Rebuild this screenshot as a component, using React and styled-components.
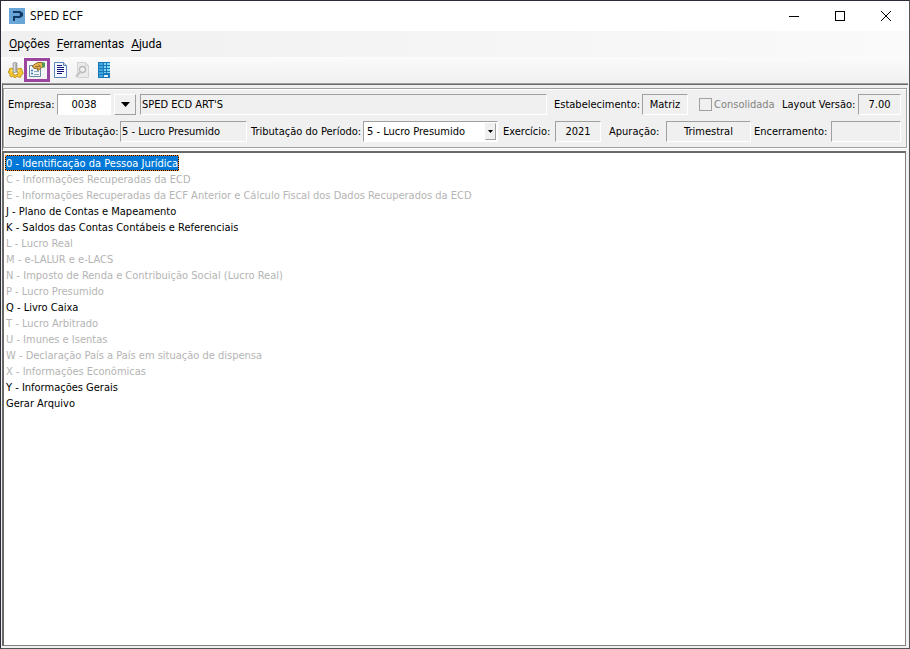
import styled, { createGlobalStyle } from "styled-components";

const items = [
  { text: "0 - Identificação da Pessoa Jurídica", selected: true },
  { text: "C - Informações Recuperadas da ECD", off: true },
  {
    text: "E - Informações Recuperadas da ECF Anterior e Cálculo Fiscal dos Dados Recuperados da ECD",
    off: true,
  },
  { text: "J - Plano de Contas e Mapeamento" },
  { text: "K - Saldos das Contas Contábeis e Referenciais" },
  { text: "L - Lucro Real", off: true },
  { text: "M - e-LALUR e e-LACS", off: true },
  { text: "N - Imposto de Renda e Contribuição Social (Lucro Real)", off: true },
  { text: "P - Lucro Presumido", off: true },
  { text: "Q - Livro Caixa" },
  { text: "T - Lucro Arbitrado", off: true },
  { text: "U - Imunes e Isentas", off: true },
  { text: "W - Declaração País a País em situação de dispensa", off: true },
  { text: "X - Informações Econômicas", off: true },
  { text: "Y - Informações Gerais" },
  { text: "Gerar Arquivo" },
];

function App() {
  return (
    <Window>
      <GlobalStyle />
      <TitleBar>
        <LogoIcon />
        <Title>SPED ECF</Title>
        <Caption aria-label="Minimizar">
          <svg width="10" height="10" shapeRendering="crispEdges">
            <path d="M0 5.5h10" stroke="#000" />
          </svg>
        </Caption>
        <Caption aria-label="Maximizar">
          <svg width="10" height="10" shapeRendering="crispEdges">
            <path d="M.5 .5h9v9h-9z" stroke="#000" fill="none" />
          </svg>
        </Caption>
        <Caption aria-label="Fechar">
          <svg width="10" height="10">
            <path d="M0 0l10 10M10 0L0 10" stroke="#000" />
          </svg>
        </Caption>
      </TitleBar>
      <MenuBar>
        <MenuItem><u>O</u>pções</MenuItem>
        <MenuItem><u>F</u>erramentas</MenuItem>
        <MenuItem><u>A</u>juda</MenuItem>
      </MenuBar>
      <ToolBar>
        <Tool $w={16} aria-label="Configurações"><GearIcon /></Tool>
        <Tool $w={26} $marked aria-label="Propriedades"><FormIcon /></Tool>
        <Tool $w={22} aria-label="Relatório"><ReportIcon /></Tool>
        <Tool $w={22} disabled aria-label="Visualizar"><PreviewIcon /></Tool>
        <Tool $w={22} aria-label="Empresa"><BuildingIcon /></Tool>
      </ToolBar>
      <Panel>
        <Group>
          <Row>
            <Label htmlFor="empresa" $w={49}>Empresa:</Label>
            <Field id="empresa" $w={54} $center $white defaultValue="0038" />
            <DropButton aria-label="Escolher empresa">
              <svg width="9" height="5"><path d="M0 0h9L4.5 5z" /></svg>
            </DropButton>
            <Field aria-label="Nome da empresa" $grow readOnly defaultValue="SPED ECD ART'S" />
            <Label htmlFor="estab" $w={88} $lead={7}>Estabelecimento:</Label>
            <Field id="estab" $w={46} $center readOnly defaultValue="Matriz" />
            <Check>
              <input type="checkbox" disabled />
              Consolidada
            </Check>
            <Label htmlFor="versao" $w={76}>Layout Versão:</Label>
            <Field id="versao" $w={43} $center readOnly defaultValue="7.00" />
          </Row>
          <Row>
            <Label htmlFor="regime" $w={112}>Regime de Tributação:</Label>
            <Field id="regime" $w={127} readOnly defaultValue="5 - Lucro Presumido" />
            <Label htmlFor="periodo" $w={112} $lead={4}>Tributação do Período:</Label>
            <Combo>
              <select id="periodo">
                <option>5 - Lucro Presumido</option>
              </select>
              <ComboArrow>
                <svg width="5" height="3"><path d="M0 0h5L2.5 3z" /></svg>
              </ComboArrow>
            </Combo>
            <Label htmlFor="exercicio" $w={52} $lead={5}>Exercício:</Label>
            <Field id="exercicio" $w={46} $center readOnly defaultValue="2021" />
            <Label htmlFor="apuracao" $w={57} $lead={8}>Apuração:</Label>
            <Field id="apuracao" $w={85} $center readOnly defaultValue="Trimestral" />
            <Label htmlFor="encerramento" $w={77} $lead={3}>Encerramento:</Label>
            <Field id="encerramento" $grow readOnly />
          </Row>
        </Group>
      </Panel>
      <ListBox>
        {items.map((item) => (
          <li key={item.text}>
            <Item disabled={item.off} $selected={item.selected}>
              {item.text}
            </Item>
          </li>
        ))}
      </ListBox>
    </Window>
  );
}

function LogoIcon() {
  return (
    <svg width="16" height="16" viewBox="0 0 16 16">
      <path d="M0 0h16v16H0z" fill="#6aa5d8" />
      <path d="M4 3h7l3 2v3l-3 2H6v3H4V8h6l1-1V6l-1-1H4z" fill="#123a66" />
    </svg>
  );
}

// gold cog with a metal pin standing in it
function GearIcon() {
  return (
    <svg width="16" height="16" viewBox="0 0 16 16">
      <path
        d="M1 7l2-1 2 1h5l2-1 2 1v2l1 1v2l-2 1v2l-2 .5-2-1.500L8 15.500H6L5.500 14l-2 1L2 14v-2L.5 11V9L2 8.500z"
        fill="#f3c634"
        stroke="#c08c12"
        strokeWidth=".8"
      />
      <path d="M3 9q4-2 8 0" stroke="#fff0a0" fill="none" />
      <ellipse cx="7.500" cy="11" rx="2.500" ry="2" fill="#fff" stroke="#b07c08" strokeWidth=".8" />
      <path d="M5 1q2-1 4 0v9q-2 1-4 0z" fill="#a9a9a9" stroke="#8a8a8a" strokeWidth=".6" />
      <path d="M6.500 1v9" stroke="#dedede" strokeWidth="1.500" />
    </svg>
  );
}

// sheet held by a pointing hand with a green cuff
function FormIcon() {
  return (
    <svg width="16" height="16" viewBox="0 0 16 16">
      <path d="M.5 3.500h11v11H.5z" fill="#eef4fb" stroke="#6f8aa3" />
      <path d="M2 8.500h2M2 11.500h2" stroke="#3f78b8" strokeWidth="1.500" />
      <path d="M5 9.500h5M5 12.500h5" stroke="#8fa9c2" />
      <path
        d="M3 4.500L6 2l3-1.500h4.500V5L11 6.500 9.500 8.500 8 8l1-2-4 .5-.5-1.500z"
        fill="#e9b650"
        stroke="#7d5a1e"
        strokeWidth=".9"
      />
      <path d="M6 4.500h5M9 2.500l3 2" stroke="#8f6626" strokeWidth=".8" />
      <path d="M13 .5h3v5h-3z" fill="#4f9650" />
    </svg>
  );
}

function ReportIcon() {
  return (
    <svg width="16" height="16" viewBox="0 0 16 16">
      <path d="M1.500 .5h9l3 3v12h-12z" fill="#f4f9ff" stroke="#5a86bd" />
      <path d="M10.500 .5v3h3" fill="#bcd4ee" stroke="#5a86bd" />
      <path d="M4 3.500h5M4 5.500h7M4 7.500h7M4 9.500h7M4 11.500h5" stroke="#15157c" />
    </svg>
  );
}

function PreviewIcon() {
  return (
    <svg width="16" height="16" viewBox="0 0 16 16">
      <path d="M2.500 .5h8l3 3v12h-11z" fill="#ebebeb" stroke="#d2d2d2" />
      <path d="M10.500 .5v3h3" fill="none" stroke="#d2d2d2" />
      <circle cx="7.500" cy="7.500" r="3" fill="#f2f2f2" stroke="#b9b9b9" strokeWidth="1.300" />
      <path d="M5.500 10L1 14.500" stroke="#c2c2c2" strokeWidth="2" />
    </svg>
  );
}

function BuildingIcon() {
  return (
    <svg width="16" height="16" viewBox="0 0 16 16" shapeRendering="crispEdges">
      <path d="M1 0h12v16H1z" fill="#1b78b8" />
      <path d="M2 1h4v2H2zM2 4h4v2H2zM2 7h4v2H2zM2 10h4v2H2zM2 13h4v2H2z" fill="#3fa6e0" />
      <path d="M7 1h2v2H7zM10 1h3v2h-3zM7 4h2v2H7zM10 4h3v2h-3zM7 7h2v2H7zM10 7h3v2h-3zM7 10h2v1H7zM10 10h3v1h-3z" fill="#7fd6f7" />
      <path d="M7 13h4v2H7z" fill="#d6f3fd" />
    </svg>
  );
}

const GlobalStyle = createGlobalStyle`
  * {
    box-sizing: border-box;
  }
  body {
    margin: 0;
    background-color: #f0f0f0;
  }
  button, input, select {
    font: inherit;
    color: inherit;
  }
`;

const TextFont = `"DejaVu Sans Condensed", "DejaVu Sans", sans-serif`;
const TitleFont = `"Open Sans", "Noto Sans", sans-serif`;
const MenuFont = `Roboto, "Noto Sans", sans-serif`;
const FaceColor = "#f0f0f0";
const ShadowColor = "#a0a0a0";
const DarkColor = "#696969";

const Window = styled.div`
  min-height: 100vh;
  display: flex;
  flex-direction: column;
  border: 1px solid #55565a;
  border-left-color: #2b2d36;
  border-top-color: #2b2d36;
  background-color: ${FaceColor};
  color: #000;
  font-family: ${TextFont};
  font-size: 11px;
  line-height: 16px;
`;
const TitleBar = styled.header`
  height: 30px;
  padding-left: 8px;
  display: flex;
  align-items: center;
  background-color: #fff;
  font-family: ${TitleFont};
`;
const Title = styled.h1`
  flex: 1;
  margin: 0;
  padding-left: 5px;
  font-size: 12px;
  font-weight: normal;
`;
const Caption = styled.button`
  width: 46px;
  height: 28px;
  padding: 0;
  border: 0;
  background: none;
  display: flex;
  align-items: center;
  justify-content: center;
`;
const MenuBar = styled.nav`
  height: 26px;
  padding-left: 8px;
  display: flex;
  align-items: center;
  gap: 7px;
  background: linear-gradient(to right, #f0f0f0, #fafafa);
  font-family: ${MenuFont};
  font-size: 12px;
`;
const MenuItem = styled.button`
  padding: 0;
  border: 0;
  background: none;
  u {
    text-underline-offset: 2px;
  }
`;
const ToolBar = styled.div`
  height: 26px;
  padding-left: 7px;
  display: flex;
  align-items: center;
  background: linear-gradient(#fbfbfb, #f0f0f0);
`;
const Tool = styled.button`
  width: ${(props) => props.$w}px;
  height: 24px;
  padding: 0;
  border: ${(props) => (props.$marked ? "3px solid #9c45a0" : "0")};
  background: none;
  display: flex;
  align-items: center;
  justify-content: center;
`;
const Panel = styled.section`
  margin: 0 1px;
  padding: 4px 1px 2px 0;
  border-left: 1px solid ${DarkColor};
  border-top: 1px solid ${ShadowColor};
  border-bottom: 1px solid #fff;
  box-shadow: inset 0 1px ${DarkColor};
`;
const Group = styled.div`
  padding: 5px 5px 5px 4px;
  border: 1px solid ${ShadowColor};
  box-shadow: inset 1px 1px #fff, 1px 1px #fff;
  display: flex;
  flex-direction: column;
  gap: 6px;
`;
const Row = styled.div`
  display: flex;
  align-items: center;
`;
const Label = styled.label`
  flex: none;
  width: ${(props) => props.$w}px;
  margin-left: ${(props) => props.$lead || 0}px;
  white-space: nowrap;
`;
const Field = styled.input`
  flex: ${(props) => (props.$grow ? "1" : "none")};
  width: ${(props) => (props.$w ? `${props.$w}px` : "auto")};
  min-width: 0;
  height: 21px;
  padding: 0 1px;
  border: 1px solid;
  border-color: ${ShadowColor} #fff #fff ${ShadowColor};
  background-color: ${(props) => (props.$white ? "#fff" : FaceColor)};
  text-align: ${(props) => (props.$center ? "center" : "left")};
  outline: none;
`;
const DropButton = styled.button`
  width: 22px;
  height: 21px;
  margin: 0 4px 0 3px;
  padding: 0;
  border: 1px solid;
  border-color: #fff ${ShadowColor} ${ShadowColor} #fff;
  background-color: ${FaceColor};
  display: flex;
  align-items: center;
  justify-content: center;
`;
const Check = styled.label`
  width: 73px;
  margin: 0 10px 0 11px;
  display: flex;
  align-items: center;
  gap: 2px;
  color: #838383;
  input {
    appearance: none;
    flex: none;
    width: 13px;
    height: 13px;
    margin: 0;
    border: 1px solid #a0a0a0;
  }
`;
const Combo = styled.div`
  width: 135px;
  height: 21px;
  padding: 1px;
  border: 1px solid;
  border-color: ${ShadowColor} #fff #fff ${ShadowColor};
  background-color: #fff;
  display: flex;
  select {
    appearance: none;
    flex: 1;
    min-width: 0;
    padding: 0 2px;
    border: 0;
    background: none;
    outline: none;
  }
`;
const ComboArrow = styled.span`
  width: 11px;
  border: 1px solid;
  border-color: ${FaceColor} ${ShadowColor} ${ShadowColor} ${FaceColor};
  background-color: ${FaceColor};
  display: flex;
  align-items: center;
  justify-content: center;
  pointer-events: none;
`;
const ListBox = styled.ul`
  flex: 1;
  margin: 0 3px 2px 1px;
  padding: 2px 0 0 1px;
  border: 1px solid ${DarkColor};
  border-top-width: 2px;
  border-left-width: 2px;
  border-color: ${DarkColor} #828282 #828282 ${DarkColor};
  background-color: #fff;
  list-style: none;
  li {
    display: flex;
  }
`;
const Item = styled.button`
  height: 16px;
  padding: 1px 1px 0;
  border: 0;
  background-color: ${(props) => (props.$selected ? "#0078d7" : "transparent")};
  color: ${(props) => (props.$selected ? "#fff" : "#000")};
  box-shadow: ${(props) => (props.$selected ? "inset 0 0 0 1px #000" : "none")};
  outline: ${(props) => (props.$selected ? "1px dotted #ff8728" : "none")};
  outline-offset: -1px;
  line-height: 15px;
  white-space: nowrap;
  &:disabled {
    color: #b4b4b4;
  }
`;

export default App;
